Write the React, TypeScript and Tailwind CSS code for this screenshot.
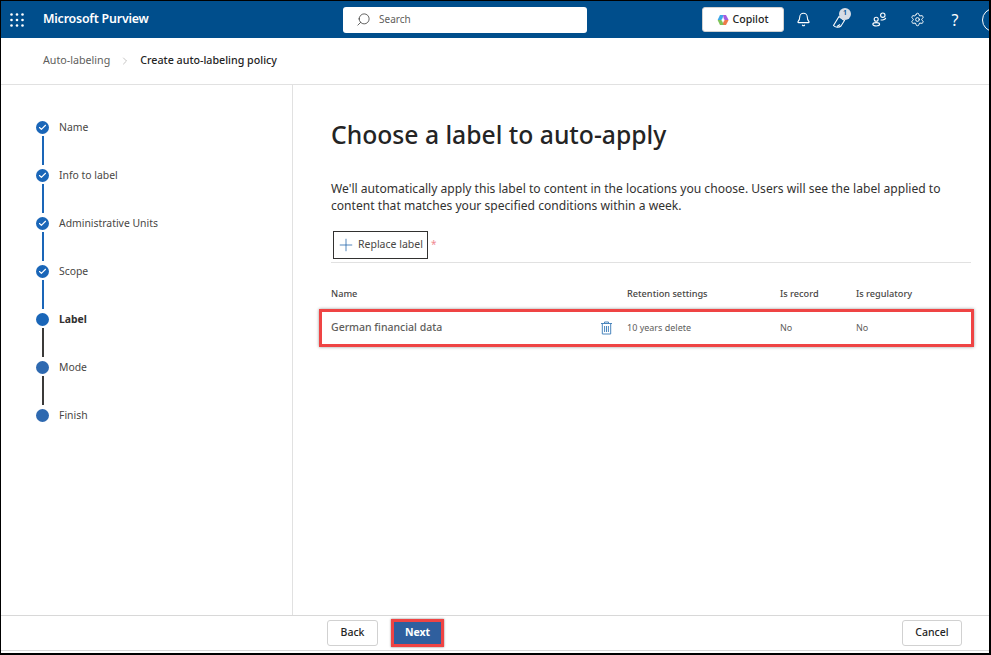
import React from 'react';
import { Bell, Plus, Search, Settings, Check, ChevronRight } from 'lucide-react';

const steps = [
  { name: 'Name', state: 'done' },
  { name: 'Info to label', state: 'done' },
  { name: 'Administrative Units', state: 'done' },
  { name: 'Scope', state: 'done' },
  { name: 'Label', state: 'current' },
  { name: 'Mode', state: 'todo' },
  { name: 'Finish', state: 'todo' },
];

const CopilotIcon = () => (
  <svg width="12" height="12" viewBox="0 0 12 12">
    <path d="M3 1 H6.5 L5 6 H0.6 Z" fill="#3fa7e8" />
    <path d="M6 1 H9 L11.6 6 H7 Z" fill="#a45ce0" />
    <path d="M7 6 H11.6 L9 11 H5.5 Z" fill="#ef7a4a" />
    <path d="M0.6 6 H5 L6.5 11 H3 Z" fill="#7fc45a" />
    <circle cx="6" cy="6" r="1.5" fill="#fff" />
  </svg>
);

const WaffleIcon = () => (
  <svg width="14" height="14" viewBox="0 0 14 14" fill="#fff">
    {[1.5, 7, 12.5].map((y) =>
      [1.5, 7, 12.5].map((x) => <circle key={`${x}-${y}`} cx={x} cy={y} r="1.3" />)
    )}
  </svg>
);

const FeedbackIcon = () => (
  <svg width="18" height="18" viewBox="0 0 18 18" fill="none" stroke="#fff" strokeWidth="1.1">
    <path d="M1.5 14.5 L7 5.5 L12.5 9.5 L9 15 C7 16.8 3 16.5 1.5 14.5 Z" />
    <path d="M5 15.5 L8 13.5" />
  </svg>
);

const PeopleIcon = () => (
  <svg width="15" height="15" viewBox="0 0 15 15" fill="none" stroke="#fff" strokeWidth="1.1">
    <circle cx="4.2" cy="7.2" r="2" />
    <ellipse cx="4.2" cy="12.3" rx="3.4" ry="1.7" />
    <circle cx="10.8" cy="3.2" r="2.2" />
    <path d="M8.6 8 C10.8 8 13.2 7.6 13.8 5.8" />
  </svg>
);

const TrashIcon = () => (
  <svg width="13" height="14" viewBox="0 0 13 14" fill="none" stroke="#4a86bd" strokeWidth="1">
    <path d="M4.5 2 V1 H8.5 V2" />
    <path d="M1 2.5 H12" />
    <path d="M2.3 2.5 V13 H10.7 V2.5" />
    <path d="M4.6 5 V11 M6.5 5 V11 M8.4 5 V11" />
  </svg>
);

const App: React.FC = () => {
  return (
    <div className="w-[991px] h-[655px] overflow-hidden bg-white border-t border-l border-r-2 border-b-2 border-black flex flex-col text-[#323130] font-['Noto_Sans','Open_Sans',sans-serif]">
      <header className="h-[37px] shrink-0 bg-[#004e8c] flex items-center text-white overflow-hidden">
        <div className="w-[32px] shrink-0 pl-[9px] flex items-center">
          <WaffleIcon />
        </div>
        <span className="ml-[10px] w-[300px] shrink-0 text-[12.4px] font-semibold tracking-[-0.2px]">Microsoft Purview</span>
        <div className="w-[244px] h-[26px] shrink-0 bg-white rounded-[3px] flex items-center pl-[13px] text-[#605e5c]">
          <Search size={15} strokeWidth={1.2} className="-scale-x-100 text-[#323130]" />
          <span className="ml-[8px] text-[10px]">Search</span>
        </div>
        <div className="ml-[115px] w-[82px] h-[25px] shrink-0 bg-white rounded-[3px] border border-[#d1d1d1] flex items-center justify-center gap-[3px] text-[#242424]">
          <CopilotIcon />
          <span className="text-[10.6px] font-medium">Copilot</span>
        </div>
        <div className="w-[38px] shrink-0 flex justify-center">
          <Bell size={15} strokeWidth={1.7} />
        </div>
        <div className="w-[38px] shrink-0 flex justify-center">
          <div className="relative w-[18px] h-[18px]">
            <FeedbackIcon />
            <span className="absolute -top-[3px] left-[7px] w-[12px] h-[12px] rounded-full bg-[#d6dde6] text-[#004e8c] text-[7px] font-semibold flex items-center justify-center">1</span>
          </div>
        </div>
        <div className="w-[38px] shrink-0 flex justify-center">
          <PeopleIcon />
        </div>
        <div className="w-[38px] shrink-0 flex justify-center">
          <Settings size={15} strokeWidth={1.6} />
        </div>
        <div className="w-[38px] shrink-0 flex justify-center text-[16px] leading-none">?</div>
        <div className="ml-[8px] w-[24px] h-[24px] rounded-full border border-white shrink-0"></div>
      </header>

      <div className="h-[47px] shrink-0 border-b border-[#e1e1e1] flex items-center pl-[42px] pb-[1px]">
        <span className="text-[10.7px] text-[#605e5c]">Auto-labeling</span>
        <ChevronRight size={12} strokeWidth={1} className="ml-[9px] text-[#8a8886]" />
        <span className="ml-[9px] text-[10.7px] font-medium text-[#242424]">Create auto-labeling policy</span>
      </div>

      <div className="flex-1 min-h-0 flex">
        <aside className="w-[292px] shrink-0 border-r border-[#e1e1e1] pt-[36px] pl-[35px]">
          {steps.map((step, i) => (
            <div key={step.name} className="flex h-[48px] relative">
              <div className={`w-[13px] h-[13px] rounded-full flex items-center justify-center shrink-0 ${step.state === 'todo' ? 'bg-[#2e69b0]' : 'bg-[#1a66b8]'}`}>
                {step.state === 'done' && <Check size={9} strokeWidth={3} className="text-white" />}
              </div>
              {i < steps.length - 1 && (
                <div className={`absolute left-[5.5px] top-[15px] w-[2px] h-[29px] ${i < 4 ? 'bg-[#1a66b8]' : 'bg-[#3b3a39]'}`}></div>
              )}
              <span className={`ml-[10px] text-[10.4px] leading-[13px] ${step.state === 'current' ? 'font-bold text-[#323130]' : 'text-[#484644]'}`}>
                {step.name}
              </span>
            </div>
          ))}
        </aside>

        <main className="flex-1 min-w-0 pl-[38px] pr-[18px] pt-[33px]">
          <h1 className="text-[24.7px] leading-[34px] font-medium text-[#242424]">Choose a label to auto-apply</h1>
          <p className="mt-[28px] text-[12.1px] leading-[17px] text-[#323130] w-[625px]">
            We'll automatically apply this label to content in the locations you choose. Users will see the label applied to content that matches your specified conditions within a week.
          </p>
          <div className="mt-[17px] border-b border-[#e1e1e1] pb-[3px] flex items-start">
            <button className="ml-[2px] w-[95px] h-[28px] border border-[#323130] flex items-center pl-[2px] gap-[2px] text-[10.5px] text-[#484644]">
              <Plus size={20} strokeWidth={0.9} className="text-[#1a5fa8]" />
              Replace label
            </button>
            <span className="ml-[3px] mt-[6px] text-[#f08a90] text-[10px]">*</span>
          </div>
          <div className="mt-[24px] flex text-[9.2px] leading-[13px] text-[#484644] font-medium">
            <span className="w-[296px]">Name</span>
            <span className="w-[153px]">Retention settings</span>
            <span className="w-[76px]">Is record</span>
            <span>Is regulatory</span>
          </div>
          <div className="-ml-[12px] mt-[9px] w-[655px] h-[38px] border-[3px] border-[#ef4444] shadow-[0_0_3px_rgba(0,0,0,0.4)] flex items-center pl-[9px] text-[9px] text-[#605e5c]">
            <span className="w-[269px] text-[10.5px] font-medium">German financial data</span>
            <TrashIcon />
            <span className="ml-[14px] w-[153px]">10 years delete</span>
            <span className="w-[76px]">No</span>
            <span>No</span>
          </div>
        </main>
      </div>

      <footer className="h-[36px] shrink-0 mb-[2px] border-t border-b border-[#d8d8d8] flex items-center text-[10.5px]">
        <button className="ml-[326px] w-[51px] h-[26px] border border-[#d1d1d1] rounded-[3px] font-medium text-[#242424]">Back</button>
        <button className="ml-[13px] w-[53px] h-[28px] border-[3px] border-[#ef4444] bg-[#2f5f9e] text-white font-bold shadow-[0_0_2px_rgba(0,0,0,0.5)]">Next</button>
        <button className="ml-auto mr-[27px] w-[60px] h-[26px] border border-[#d1d1d1] rounded-[3px] font-medium text-[#242424]">Cancel</button>
      </footer>
    </div>
  );
};

export default App;
